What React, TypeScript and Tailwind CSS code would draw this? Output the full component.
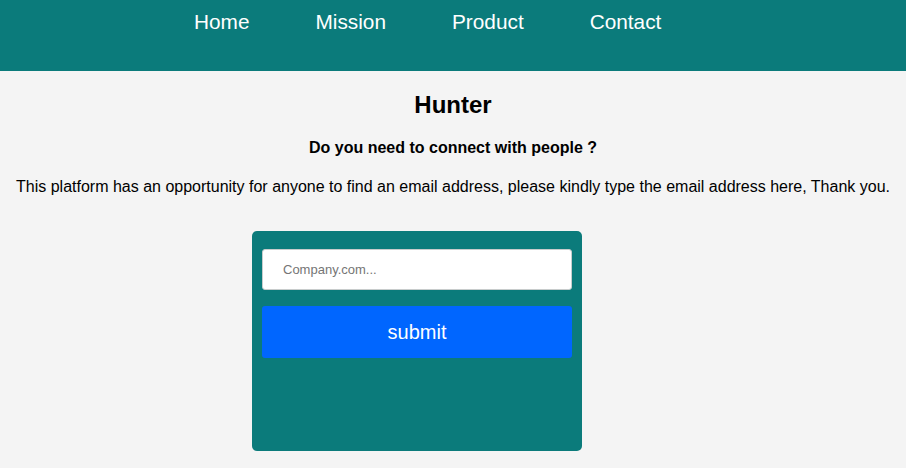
export default function App() {
  return (
    <div className="min-h-[468px] bg-[#f4f4f4] font-['Liberation_Sans',Arial,sans-serif] text-black">
      {/* 顶部导航 */}
      <header className="h-[71px] bg-[#0b7b7b]">
        <ul className="flex gap-[66px] pl-[194px] pt-[10px] text-[20.8px] leading-[24px] text-white">
          <li>Home</li>
          <li>Mission</li>
          <li>Product</li>
          <li>Contact</li>
        </ul>
      </header>

      {/* 介绍 */}
      <main className="flex flex-col items-center text-center">
        <h1 className="mt-[20px] text-[24px] leading-[28px] font-bold">Hunter</h1>
        <h3 className="mt-[20px] text-[16px] leading-[18px] font-bold">Do you need to connect with people ?</h3>
        <p className="mt-[21px] text-[16px] leading-[18px]">
          This platform has an opportunity for anyone to find an email address, please kindly type the email address here, Thank you.
        </p>
      </main>

      {/* 搜索卡片 */}
      <div className="ml-[252px] mt-[35px] flex h-[220px] w-[330px] flex-col gap-[16px] rounded-[5px] bg-[#0b7b7b] px-[10px] pt-[18px]">
        <input
          placeholder="Company.com..."
          className="h-[41px] w-full rounded-[3px] border border-[#c8cccc] bg-white pl-[20px] text-[13px] text-black outline-none placeholder:text-[#757575]"
        />
        <button className="flex h-[52px] w-full items-center justify-center rounded-[3px] bg-[#0066ff] text-[20px] text-white">
          submit
        </button>
      </div>
    </div>
  );
}
